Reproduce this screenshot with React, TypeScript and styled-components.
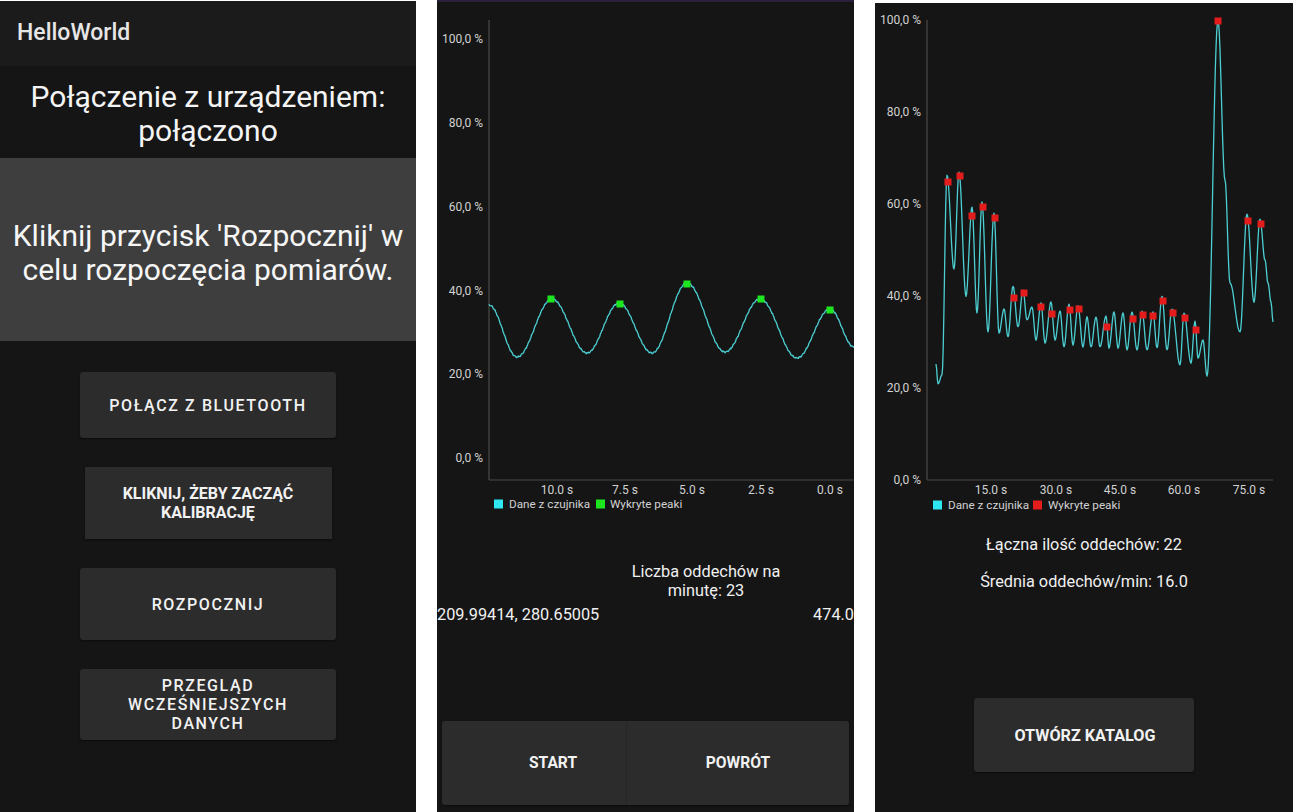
import React from "react";
import styled, { createGlobalStyle } from "styled-components";

type Pt = [number, number];

const GlobalStyle = createGlobalStyle`
  html, body { margin: 0; padding: 0; background: #ffffff; }
  body { font-family: Roboto, "Noto Sans", "DejaVu Sans", sans-serif; }
  * { box-sizing: border-box; }
`;

const Page = styled.div`
  display: flex;
  align-items: flex-start;
  gap: 21px;
  width: 1295px;
  height: 812px;
  background: #ffffff;
  overflow: hidden;
`;

const Phone = styled.div<{ $w: number; $top: number }>`
  width: ${(p) => p.$w}px;
  height: ${(p) => 812 - p.$top}px;
  margin-top: ${(p) => p.$top}px;
  flex-shrink: 0;
  background: #151515;
  color: #ffffff;
  display: flex;
  flex-direction: column;
  overflow: hidden;
  font-family: Roboto, "Noto Sans", sans-serif;
`;

/* ---------- panel 1 ---------- */

const AppBar = styled.div`
  height: 65px;
  flex-shrink: 0;
  background: #1b1b1b;
  display: flex;
  align-items: center;
  padding: 0 0 2px 17px;
  font-size: 23px;
  font-weight: 500;
  color: #e6e6e6;
`;

const StatusTitle = styled.div`
  padding: 14px 4px 10px;
  text-align: center;
  font-size: 30px;
  line-height: 34px;
  color: #f4f4f4;
  white-space: nowrap;
`;

const InfoBlock = styled.div`
  height: 183px;
  flex-shrink: 0;
  background: #3e3e3e;
  display: flex;
  align-items: center;
  justify-content: center;
  padding-top: 7px;
  text-align: center;
  font-size: 30px;
  line-height: 34px;
  color: #f6f6f6;
  white-space: nowrap;
`;

const ButtonColumn = styled.div`
  display: flex;
  flex-direction: column;
  align-items: center;
  gap: 29px;
  padding-top: 31px;
`;

const MenuButton = styled.div<{ $w: number; $h: number; $spaced: boolean }>`
  width: ${(p) => p.$w}px;
  height: ${(p) => p.$h}px;
  background: #2c2c2c;
  border-radius: ${(p) => (p.$spaced ? 3 : 0)}px;
  box-shadow: 0 1px 2px rgba(0, 0, 0, 0.5);
  display: flex;
  align-items: center;
  justify-content: center;
  text-align: center;
  font-size: 16px;
  font-weight: ${(p) => (p.$spaced ? 500 : 700)};
  letter-spacing: ${(p) => (p.$spaced ? "1.6px" : "0px")};
  line-height: 19px;
  color: #f2f2f2;
  white-space: nowrap;
`;

/* ---------- chart ---------- */

const ChartSvg = styled.svg`
  display: block;
  flex-shrink: 0;
  font-family: Roboto, "Noto Sans", sans-serif;
`;

const StatusStrip = styled.div`
  height: 2px;
  flex-shrink: 0;
  background: #2b1f3e;
`;

interface LegendItem {
  x: number;
  textX: number;
  color: string;
  label: string;
}

interface ChartProps {
  width: number;
  height: number;
  ox: number;
  oy: number;
  axisX: number;
  axisTop: number;
  axisBottom: number;
  axisRight: number;
  labelRight: number;
  yTicks: { y: number; label: string }[];
  xTicks: { x: number; label: string }[];
  xLabelY: number;
  legendY: number;
  legend: LegendItem[];
  extremes: Pt[];
  wobble: number;
  markers: Pt[];
  markerColor: string;
}

function buildPath(ext: Pt[], wobble: number): string {
  const out: string[] = [];
  for (let i = 0; i < ext.length - 1; i++) {
    const [x0, y0] = ext[i];
    const [x1, y1] = ext[i + 1];
    const steps = Math.max(3, Math.ceil((x1 - x0) * 1.5));
    for (let k = 0; k < steps; k++) {
      const t = k / steps;
      const x = x0 + (x1 - x0) * t;
      let y = y0 + ((y1 - y0) * (1 - Math.cos(Math.PI * t))) / 2;
      if (wobble) y += wobble * (Math.sin(x * 1.9) * 0.6 + Math.sin(x * 4.3) * 0.4);
      out.push(`${x.toFixed(2)},${y.toFixed(2)}`);
    }
  }
  const last = ext[ext.length - 1];
  out.push(`${last[0]},${last[1]}`);
  return "M" + out.join(" L");
}

function Chart(p: ChartProps) {
  const path = buildPath(p.extremes, p.wobble);
  return (
    <ChartSvg width={p.width} height={p.height} viewBox={`0 0 ${p.width} ${p.height}`}>
      <g transform={`translate(${-p.ox},${-p.oy})`}>
        <line x1={p.axisX} y1={p.axisTop} x2={p.axisX} y2={p.axisBottom} stroke="#4a4a4a" strokeWidth={1.2} />
        <line x1={p.axisX} y1={p.axisBottom} x2={p.axisRight} y2={p.axisBottom} stroke="#4a4a4a" strokeWidth={1.2} />
        {p.yTicks.map((t) => (
          <text key={t.label} x={p.labelRight} y={t.y} textAnchor="end" dominantBaseline="middle" fontSize={12} fill="#d2d2d2">
            {t.label}
          </text>
        ))}
        {p.xTicks.map((t) => (
          <text key={t.label} x={t.x} y={p.xLabelY} textAnchor="middle" dominantBaseline="middle" fontSize={12} fill="#d2d2d2">
            {t.label}
          </text>
        ))}
        <path d={path} fill="none" stroke="#4ccfd2" strokeWidth={1.3} strokeLinejoin="round" />
        {p.markers.map(([x, y], i) => (
          <rect key={i} x={x - 3.5} y={y - 3.5} width={7} height={7} fill={p.markerColor} />
        ))}
        {p.legend.map((l) => (
          <g key={l.label}>
            <rect x={l.x} y={p.legendY - 4.5} width={9} height={9} fill={l.color} />
            <text x={l.textX} y={p.legendY + 0.5} dominantBaseline="middle" fontSize={11.7} fill="#d2d2d2">
              {l.label}
            </text>
          </g>
        ))}
      </g>
    </ChartSvg>
  );
}

/* ---------- panel 2 ---------- */

const BpmText = styled.div`
  margin-top: 47px;
  padding-left: 121px;
  text-align: center;
  font-size: 16.3px;
  line-height: 19px;
  color: #f0f0f0;
`;

const ValuesRow = styled.div`
  margin: 5px 0 0 0;
  display: flex;
  justify-content: space-between;
  font-size: 16.3px;
  line-height: 19px;
  color: #f0f0f0;
  white-space: nowrap;
`;

const BottomBar = styled.div`
  margin: auto 5px 7px;
  height: 84px;
  display: flex;
  flex-shrink: 0;
  border-radius: 3px;
  overflow: hidden;
  box-shadow: 0 1px 2px rgba(0, 0, 0, 0.5);
`;

const BarButton = styled.div<{ $w: number; $shift: number; $divider: boolean }>`
  width: ${(p) => p.$w}px;
  height: 100%;
  background: #2c2c2c;
  border-left: ${(p) => (p.$divider ? "1px solid #262626" : "none")};
  display: flex;
  align-items: center;
  justify-content: center;
  padding-left: ${(p) => p.$shift}px;
  font-size: 15.6px;
  font-weight: 700;
  color: #f2f2f2;
`;

/* ---------- panel 3 ---------- */

const StatLine = styled.div<{ $gap: number }>`
  margin-top: ${(p) => p.$gap}px;
  text-align: center;
  font-size: 16.3px;
  line-height: 19px;
  color: #f0f0f0;
`;

const OpenButton = styled.div`
  margin: 107px auto 0;
  width: 220px;
  height: 74px;
  background: #2c2c2c;
  border-radius: 3px;
  box-shadow: 0 1px 2px rgba(0, 0, 0, 0.5);
  display: flex;
  align-items: center;
  justify-content: center;
  padding-left: 2px;
  font-size: 16.2px;
  font-weight: 700;
  color: #f2f2f2;
`;

/* ---------- data ---------- */

const liveExtremes: Pt[] = [
  [489, 305], [517, 357], [552, 299], [587, 353], [619, 303], [652, 353],
  [687, 283], [725, 352], [760, 299], [797, 358], [830, 309], [854, 347],
];
const liveMarkers: Pt[] = [[551, 299], [620, 304], [687, 284], [761, 299], [830, 310]];

const historyExtremes: Pt[] = [
  [936, 364], [938, 384], [942, 375], [947, 175], [954, 269], [959, 172], [966, 296],
  [972, 207], [977, 313], [982, 202], [988, 332], [994, 213], [999, 333], [1004, 309],
  [1008, 337], [1013, 286], [1018, 327], [1023, 290], [1027, 320], [1032, 307],
  [1036, 340], [1041, 303], [1045, 343], [1051, 302], [1055, 340], [1060, 311],
  [1064, 347], [1069, 304], [1073, 345], [1078, 306], [1083, 347], [1087, 317],
  [1091, 347], [1096, 317], [1100, 347], [1106, 316], [1109, 348], [1114, 312],
  [1118, 348], [1123, 313], [1127, 350], [1132, 312], [1137, 350], [1142, 311],
  [1147, 350], [1153, 312], [1157, 348], [1162, 296], [1167, 350], [1172, 309],
  [1180, 365], [1184, 313], [1191, 363], [1195, 321], [1198, 358], [1203, 340],
  [1207, 376], [1218, 20], [1225, 180], [1230, 283], [1240, 332], [1247, 214],
  [1254, 302], [1260, 219], [1265, 260], [1268, 283], [1271, 302], [1273, 322],
];
const historyMarkers: Pt[] = [
  [948, 182], [960, 176], [972, 216], [983, 207], [995, 218], [1014, 298], [1024, 293],
  [1041, 307], [1052, 314], [1070, 310], [1079, 309], [1107, 327], [1133, 319],
  [1143, 315], [1153, 316], [1163, 301], [1173, 313], [1185, 318], [1196, 330],
  [1218, 21], [1248, 221], [1261, 224],
];

const pctLabels = ["100,0 %", "80,0 %", "60,0 %", "40,0 %", "20,0 %", "0,0 %"];

const menu = [
  { label: ["POŁĄCZ Z BLUETOOTH"], w: 256, h: 66, spaced: true },
  { label: ["KLIKNIJ, ŻEBY ZACZĄĆ", "KALIBRACJĘ"], w: 247, h: 72, spaced: false },
  { label: ["ROZPOCZNIJ"], w: 256, h: 72, spaced: true },
  { label: ["PRZEGLĄD", "WCZEŚNIEJSZYCH", "DANYCH"], w: 256, h: 71, spaced: true },
];

export default function App() {
  return (
    <>
      <GlobalStyle />
      <Page>
        <Phone $w={416} $top={1}>
          <AppBar>HelloWorld</AppBar>
          <StatusTitle>
            Połączenie z urządzeniem:
            <br />
            połączono
          </StatusTitle>
          <InfoBlock>
            Kliknij przycisk 'Rozpocznij' w
            <br />
            celu rozpoczęcia pomiarów.
          </InfoBlock>
          <ButtonColumn>
            {menu.map((m) => (
              <MenuButton key={m.label[0]} $w={m.w} $h={m.h} $spaced={m.spaced}>
                <span>
                  {m.label.map((l, i) => (
                    <React.Fragment key={l}>
                      {i > 0 && <br />}
                      {l}
                    </React.Fragment>
                  ))}
                </span>
              </MenuButton>
            ))}
          </ButtonColumn>
        </Phone>

        <Phone $w={417} $top={0}>
          <StatusStrip />
          <Chart
            width={417}
            height={513}
            ox={437}
            oy={2}
            axisX={489}
            axisTop={20}
            axisBottom={480}
            axisRight={854}
            labelRight={483}
            yTicks={pctLabels.map((label, i) => ({ label, y: 40 + i * 83.8 }))}
            xTicks={[
              { x: 557, label: "10.0 s" },
              { x: 625, label: "7.5 s" },
              { x: 692, label: "5.0 s" },
              { x: 761, label: "2.5 s" },
              { x: 830, label: "0.0 s" },
            ]}
            xLabelY={491}
            legendY={504}
            legend={[
              { x: 494, textX: 509, color: "#2ee5f2", label: "Dane z czujnika" },
              { x: 596, textX: 610, color: "#1ee61e", label: "Wykryte peaki" },
            ]}
            extremes={liveExtremes}
            wobble={0.9}
            markers={liveMarkers}
            markerColor="#1ee61e"
          />
          <BpmText>
            Liczba oddechów na
            <br />
            minutę: 23
          </BpmText>
          <ValuesRow>
            <span>209.99414, 280.65005</span>
            <span>474.0</span>
          </ValuesRow>
          <BottomBar>
            <BarButton $w={184} $shift={38} $divider={false}>START</BarButton>
            <BarButton $w={223} $shift={0} $divider={true}>POWRÓT</BarButton>
          </BottomBar>
        </Phone>

        <Phone $w={418} $top={3}>
          <Chart
            width={418}
            height={512}
            ox={875}
            oy={3}
            axisX={927}
            axisTop={20}
            axisBottom={480}
            axisRight={1273}
            labelRight={921}
            yTicks={pctLabels.map((label, i) => ({ label, y: 20.5 + i * 92 }))}
            xTicks={[
              { x: 991, label: "15.0 s" },
              { x: 1056, label: "30.0 s" },
              { x: 1120, label: "45.0 s" },
              { x: 1184, label: "60.0 s" },
              { x: 1249, label: "75.0 s" },
            ]}
            xLabelY={491}
            legendY={505}
            legend={[
              { x: 933, textX: 948, color: "#2ee5f2", label: "Dane z czujnika" },
              { x: 1033, textX: 1048, color: "#e51c1c", label: "Wykryte peaki" },
            ]}
            extremes={historyExtremes}
            wobble={0.4}
            markers={historyMarkers}
            markerColor="#e51c1c"
          />
          <StatLine $gap={20}>Łączna ilość oddechów: 22</StatLine>
          <StatLine $gap={18}>Średnia oddechów/min: 16.0</StatLine>
          <OpenButton>OTWÓRZ KATALOG</OpenButton>
        </Phone>
      </Page>
    </>
  );
}
